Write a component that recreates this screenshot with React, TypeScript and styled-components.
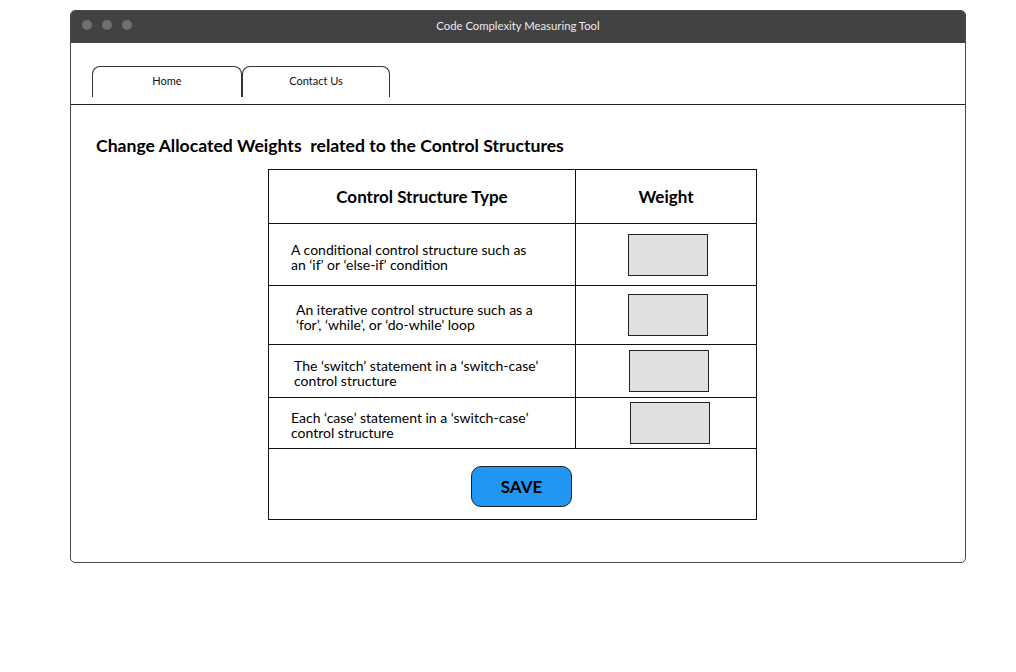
import React from 'react';
import styled, { createGlobalStyle } from 'styled-components';

const GlobalStyle = createGlobalStyle`
  html, body {
    margin: 0;
    padding: 0;
    background: #fff;
  }
  body {
    font-family: Lato, "Open Sans", "Liberation Sans", sans-serif;
    color: #000;
  }
`;

const Page = styled.div`
  padding: 10px 0 0 70px;
`;

const Window = styled.div`
  width: 896px;
  height: 553px;
  box-sizing: border-box;
  border: 1px solid #4a4a4a;
  border-radius: 5px;
  overflow: hidden;
  background: #fff;
`;

const TitleBar = styled.div`
  position: relative;
  height: 33px;
  box-sizing: border-box;
  padding-bottom: 3px;
  margin: -1px -1px 0;
  background: #424242;
  display: flex;
  align-items: center;
  justify-content: center;
  color: #ececec;
  font-size: 11.3px;
`;

const Dots = styled.div`
  position: absolute;
  left: 12px;
  top: 10px;
  display: flex;
  gap: 10px;
`;

const Dot = styled.span`
  width: 10px;
  height: 10px;
  border-radius: 50%;
  background: #707070;
`;

const TabStrip = styled.div`
  height: 62px;
  box-sizing: border-box;
  border-bottom: 1px solid #222;
  padding: 23px 0 0 21px;
  display: flex;
`;

const Tab = styled.div<{ $w: number }>`
  width: ${p => p.$w}px;
  height: 31px;
  box-sizing: border-box;
  border: 1px solid #333;
  border-bottom: none;
  border-radius: 8px 8px 0 0;
  display: flex;
  justify-content: center;
  padding-top: 7px;
  font-size: 11px;
  color: #111;
`;

const Content = styled.div`
  padding: 31px 0 0 25px;
`;

const Heading = styled.h1`
  margin: 0;
  font-size: 17.6px;
  line-height: 20px;
  font-weight: 700;
  white-space: pre;
`;

const Table = styled.div`
  margin: 13px 0 0 172px;
  width: 489px;
  height: 351px;
  box-sizing: border-box;
  border: 1px solid #111;
  display: grid;
  grid-template-columns: 307px 1fr;
  grid-template-rows: 54px 62px 59px 53px 51px 1fr;
`;

const HeadCell = styled.div<{ $last?: boolean }>`
  display: flex;
  align-items: center;
  justify-content: center;
  font-weight: 700;
  font-size: 17px;
  border-bottom: 1px solid #111;
  border-right: ${p => (p.$last ? 'none' : '1px solid #111')};
`;

const TypeCell = styled.div<{ $indent: number }>`
  display: flex;
  align-items: center;
  padding: 4px 0 0 ${p => p.$indent}px;
  font-size: 14px;
  line-height: 15px;
  border-bottom: 1px solid #111;
  border-right: 1px solid #111;
`;

const WeightCell = styled.div<{ $shift: number }>`
  display: flex;
  align-items: center;
  padding-left: ${p => 52 + p.$shift}px;
  border-bottom: 1px solid #111;
`;

const WeightInput = styled.input`
  width: 80px;
  height: 42px;
  box-sizing: border-box;
  border: 1px solid #222;
  background: #e0e0e0;
  margin: 0;
  padding: 0 6px;
`;

const SaveRow = styled.div`
  grid-column: 1 / -1;
  display: flex;
  justify-content: center;
  padding: 17px 0 0 18px;
  align-items: flex-start;
`;

const SaveButton = styled.button`
  width: 101px;
  height: 41px;
  box-sizing: border-box;
  border: 1px solid #222;
  border-radius: 10px;
  background: #2196f3;
  font-family: inherit;
  font-weight: 700;
  font-size: 17px;
  color: #000;
  padding: 0;
  cursor: pointer;
`;

const rows = [
  { text: ['A conditional control structure such as', 'an \u2018if\u2019 or \u2018else-if\u2019 condition'], indent: 22, shift: 0 },
  { text: ['An iterative control structure such as a', '\u2018for\u2019, \u2018while\u2019, or \u2018do-while\u2019 loop'], indent: 27, shift: 0 },
  { text: ['The \u2018switch\u2019 statement in a \u2018switch-case\u2019', 'control structure'], indent: 25, shift: 1 },
  { text: ['Each \u2018case\u2019 statement in a \u2018switch-case\u2019', 'control structure'], indent: 22, shift: 2 },
];

export default function App() {
  return (
    <Page>
      <GlobalStyle />
      <Window>
        <TitleBar>
          <Dots>
            <Dot />
            <Dot />
            <Dot />
          </Dots>
          Code Complexity Measuring Tool
        </TitleBar>
        <TabStrip>
          <Tab $w={150}>Home</Tab>
          <Tab $w={148}>Contact Us</Tab>
        </TabStrip>
        <Content>
          <Heading>{'Change Allocated Weights  related to the Control Structures'}</Heading>
          <Table>
            <HeadCell>Control Structure Type</HeadCell>
            <HeadCell $last>Weight</HeadCell>
            {rows.map((r, i) => (
              <React.Fragment key={i}>
                <TypeCell $indent={r.indent}>
                  <div>
                    {r.text[0]}
                    <br />
                    {r.text[1]}
                  </div>
                </TypeCell>
                <WeightCell $shift={r.shift}>
                  <WeightInput type="text" />
                </WeightCell>
              </React.Fragment>
            ))}
            <SaveRow>
              <SaveButton type="button">SAVE</SaveButton>
            </SaveRow>
          </Table>
        </Content>
      </Window>
    </Page>
  );
}
